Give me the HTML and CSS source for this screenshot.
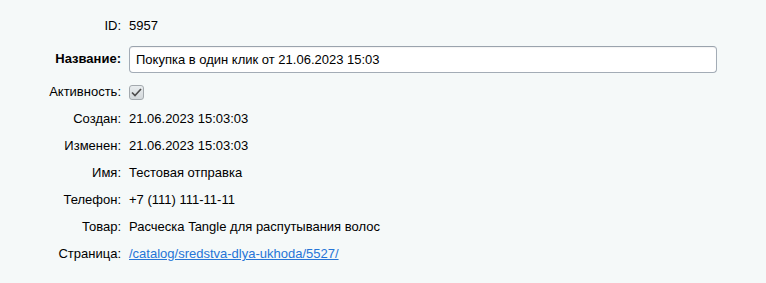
FILE: index.html
```html
<!DOCTYPE html>
<html lang="ru">
<head>
<meta charset="utf-8">
<link rel="stylesheet" href="styles.css">
</head>
<body>
<div class="form">
  <div class="row">
    <div class="label">ID:</div>
    <div class="value">5957</div>
  </div>
  <div class="row row-input">
    <div class="label bold">Название:</div>
    <div class="value"><input class="text-input" type="text" value="Покупка в один клик от 21.06.2023 15:03"></div>
  </div>
  <div class="row">
    <div class="label">Активность:</div>
    <div class="value">
      <span class="checkbox">
        <svg width="11" height="9" viewBox="0 0 11 9"><path d="M1 4.5 L4 7.5 L10 1" fill="none" stroke="#4d4d4d" stroke-width="1.7"/></svg>
      </span>
    </div>
  </div>
  <div class="row">
    <div class="label">Создан:</div>
    <div class="value">21.06.2023 15:03:03</div>
  </div>
  <div class="row">
    <div class="label">Изменен:</div>
    <div class="value">21.06.2023 15:03:03</div>
  </div>
  <div class="row">
    <div class="label">Имя:</div>
    <div class="value">Тестовая отправка</div>
  </div>
  <div class="row">
    <div class="label">Телефон:</div>
    <div class="value">+7 (111) 111-11-11</div>
  </div>
  <div class="row">
    <div class="label">Товар:</div>
    <div class="value">Расческа Tangle для распутывания волос</div>
  </div>
  <div class="row">
    <div class="label">Страница:</div>
    <div class="value"><a class="link" href="#">/catalog/sredstva-dlya-ukhoda/5527/</a></div>
  </div>
</div>
</body>
</html>
```
FILE: styles.css
```css
html, body {
  margin: 0;
  padding: 0;
  background: #f5f9f9;
}
body {
  font-family: "Liberation Sans", Arial, sans-serif;
  font-size: 13px;
  color: #000;
  width: 766px;
  height: 283px;
  overflow: hidden;
}
.form {
  display: flex;
  flex-direction: column;
  padding-top: 12px;
}
.row {
  display: grid;
  grid-template-columns: 121px 1fr;
  column-gap: 8px;
  align-items: center;
  height: 27px;
}
.row-input {
  height: 39px;
}
.label {
  text-align: right;
  color: #000;
}
.bold {
  font-weight: bold;
}
.value {
  display: flex;
  align-items: center;
}
.text-input {
  box-sizing: border-box;
  width: 588px;
  height: 27px;
  margin-top: 1px;
  padding: 0 6px;
  border: 1px solid #a3acb6;
  border-top-color: #9aa3ad;
  border-radius: 4px;
  background: #fff;
  font-family: "Liberation Sans", Arial, sans-serif;
  font-size: 13px;
  color: #000;
  outline: none;
  box-shadow: inset 0 1px 1px rgba(0,0,0,0.05);
}
.checkbox {
  box-sizing: border-box;
  width: 15px;
  height: 15px;
  border: 1px solid #a3a9ae;
  border-radius: 3px;
  background: linear-gradient(#e8ecee, #d3d8db);
  display: flex;
  align-items: center;
  justify-content: center;
  margin-top: 1px;
}
.link {
  color: #2675d7;
  text-decoration: underline;
}
```
